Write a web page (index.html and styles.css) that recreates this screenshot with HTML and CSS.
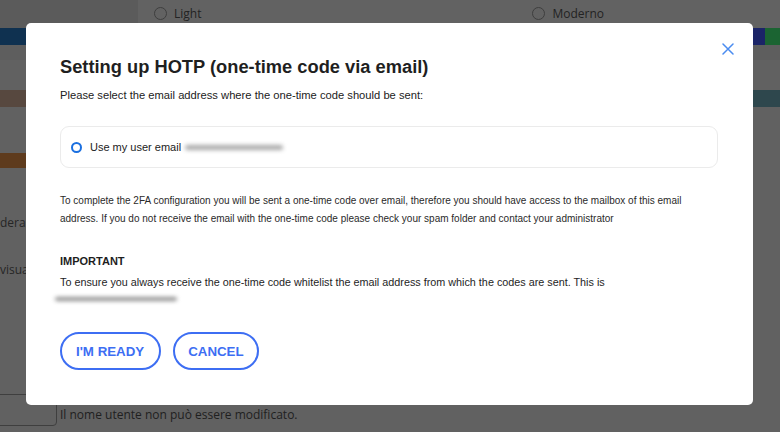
FILE: index.html
```html
<!DOCTYPE html>
<html lang="en">
<head>
<meta charset="utf-8">
<title>Setting up HOTP</title>
<link rel="stylesheet" href="styles.css">
</head>
<body>
<div class="page">
  <div class="topbar">
    <div class="top-left"></div>
    <div class="top-opt opt-light"><span class="bg-radio"></span>Light</div>
    <div class="top-opt opt-modern"><span class="bg-radio"></span>Moderno</div>
  </div>
  <div class="row row-blue">
    <div class="cell-blue"></div>
    <div class="cell-fill"></div>
    <div class="cell-navy"></div>
    <div class="cell-green"></div>
  </div>
  <div class="row row-light"></div>
  <div class="row row-brown">
    <div class="cell-brown"></div>
    <div class="cell-fill"></div>
    <div class="cell-teal"></div>
  </div>
  <div class="row row-orange">
    <div class="cell-orange"></div>
  </div>
  <div class="bg-text t1">derazione</div>
  <div class="bg-text t2">visuale</div>
  <div class="bottom-row">
    <div class="bg-input"></div>
    <div class="bg-hint">Il nome utente non può essere modificato.</div>
  </div>

  <div class="modal">
    <button class="close" aria-label="Close">
      <svg width="12" height="12" viewBox="0 0 12 12"><path d="M1 1 L11 11 M11 1 L1 11" stroke="#4a8cf0" stroke-width="1.5" fill="none" stroke-linecap="round"/></svg>
    </button>
    <h1 class="title">Setting up HOTP (one-time code via email)</h1>
    <p class="subtitle">Please select the email address where the one-time code should be sent:</p>
    <label class="option">
      <span class="radio"></span>
      <span class="option-text">Use my user email</span>
      <span class="blur blur-email"></span>
    </label>
    <p class="info">To complete the 2FA configuration you will be sent a one-time code over email, therefore you should have access to the mailbox of this email address. If you do not receive the email with the one-time code please check your spam folder and contact your administrator</p>
    <h2 class="important">IMPORTANT</h2>
    <p class="ensure">To ensure you always receive the one-time code whitelist the email address from which the codes are sent. This is</p>
    <span class="blur blur-sender"></span>
    <div class="actions">
      <button class="btn btn-ready">I'M READY</button>
      <button class="btn">CANCEL</button>
    </div>
  </div>
</div>
</body>
</html>
```

FILE: styles.css
```css
* { box-sizing: border-box; }
html, body { margin: 0; padding: 0; }
body {
  width: 780px;
  height: 432px;
  overflow: hidden;
  background: #616161;
  font-family: "Liberation Sans", Arial, sans-serif;
}
.page {
  position: relative;
  width: 780px;
  height: 432px;
  display: flex;
  flex-direction: column;
}
.topbar {
  height: 28px;
  display: flex;
  align-items: flex-start;
  font-family: "Open Sans", "Noto Sans", sans-serif;
  font-size: 12px;
  color: #232323;
  background: #626262;
}
.top-left {
  width: 138px;
  height: 28px;
  background: #5b5b5b;
}
.top-opt {
  display: flex;
  align-items: center;
  gap: 7px;
  height: 28px;
  padding-bottom: 2px;
}
.opt-light { margin-left: 16px; }
.opt-modern { margin-left: 331px; }
.bg-radio {
  width: 13px;
  height: 13px;
  border-radius: 50%;
  border: 1px solid #3e3e3e;
}
.row { display: flex; }
.row-blue { height: 17px; }
.cell-blue { width: 26px; background: #0f3150; }
.cell-fill { flex: 1; }
.cell-navy { width: 12px; background: #1b2467; }
.cell-green { width: 15px; background: #1b6432; }
.row-light { height: 15px; background: #5e5e5e; }
.row-brown { height: 17px; margin-top: 30px; }
.cell-brown { width: 26px; background: #57483f; }
.cell-teal { width: 27px; background: #2e474d; }
.row-orange { height: 15px; margin-top: 46px; }
.cell-orange { width: 26px; background: #5e3b1d; }
.bg-text {
  font-family: "Open Sans", "Noto Sans", sans-serif;
  font-size: 12px;
  color: #262626;
  white-space: nowrap;
}
.t1 { margin-top: 46px; }
.t2 { margin-top: 30px; }
.bottom-row {
  margin-top: auto;
  margin-bottom: 6px;
  display: flex;
  align-items: center;
  gap: 3px;
}
.bg-input {
  width: 63px;
  height: 32px;
  margin-left: -6px;
  border: 1px solid #3f3f3f;
  border-radius: 4px;
}
.bg-hint {
  font-family: "Open Sans", "Noto Sans", sans-serif;
  font-size: 12px;
  color: #202020;
  padding-top: 8px;
}

.modal {
  position: absolute;
  left: 26px;
  top: 23px;
  width: 727px;
  height: 382px;
  background: #fff;
  border-radius: 5px;
  padding: 32px 35px 0 34px;
  color: #222;
}
.close {
  position: absolute;
  top: 20px;
  right: 19px;
  width: 12px;
  height: 12px;
  padding: 0;
  border: 0;
  background: none;
  display: block;
}
.close svg { display: block; }
.title {
  margin: 0;
  font-size: 18.3px;
  line-height: 24px;
  font-weight: bold;
  color: #1f1f1f;
}
.subtitle {
  margin: 9px 0 0;
  font-size: 11.2px;
  line-height: 14px;
}
.option {
  margin-top: 24px;
  height: 42px;
  border: 1.5px solid #ebebeb;
  border-radius: 9px;
  display: flex;
  align-items: center;
  padding-left: 10px;
  font-size: 11px;
}
.radio {
  width: 11px;
  height: 11px;
  border-radius: 50%;
  border: 2.5px solid #1a6fe0;
  margin-right: 8px;
}
.option-text { margin-right: 4px; }
.blur {
  display: block;
  background: #9a9a9a;
  filter: blur(2px);
  border-radius: 3px;
}
.blur-email {
  width: 98px;
  height: 5px;
  background: #a8a8a8;
}
.info {
  margin: 24px 0 0;
  font-size: 10px;
  line-height: 18px;
  color: #2a2a2a;
}
.important {
  margin: 25px 0 0;
  font-size: 11px;
  line-height: 16px;
  font-weight: bold;
  color: #1e1e1e;
}
.ensure {
  margin: 5px 0 0;
  font-size: 10.8px;
  line-height: 16px;
  color: #1e1e1e;
}
.blur-sender {
  width: 122px;
  height: 4px;
  margin: 7px 0 0 -5px;
  background: #8e8e8e;
}
.actions {
  display: flex;
  gap: 12px;
  margin-top: 31px;
}
.btn {
  height: 38px;
  padding: 0 13px;
  border: 2px solid #3d6ef3;
  border-radius: 19px;
  background: #fff;
  color: #3d6ef3;
  font-family: "Liberation Sans", Arial, sans-serif;
  font-weight: bold;
  font-size: 13.3px;
}
.btn-ready { padding: 0 15px 0 14px; }
```
